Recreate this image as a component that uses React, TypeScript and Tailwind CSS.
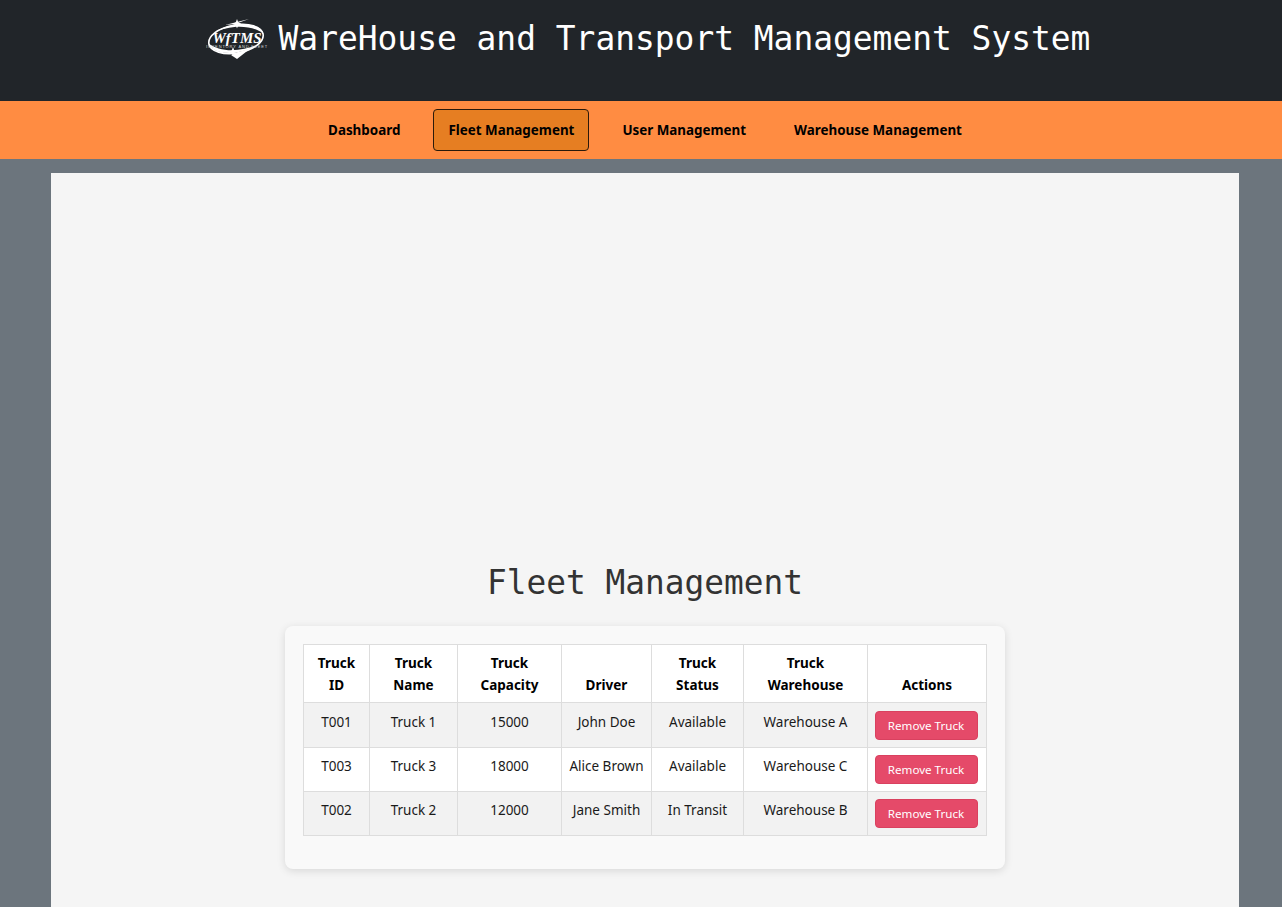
import React from "react";

const rows = [
  ["T001", "Truck 1", "15000", "John Doe", "Available", "Warehouse A"],
  ["T003", "Truck 3", "18000", "Alice Brown", "Available", "Warehouse C"],
  ["T002", "Truck 2", "12000", "Jane Smith", "In Transit", "Warehouse B"],
];
const rowHeights = ["h-[45px]", "h-[44px]", "h-[44px]"];
const textPad = ["pt-[9px]", "pt-[8px]", "pt-[8px]"];
const btnPad = ["pt-[8px]", "pt-[7px]", "pt-[7px]"];
const headers: [string, string | null][] = [
  ["Truck", "ID"],
  ["Truck", "Name"],
  ["Truck", "Capacity"],
  ["Driver", null],
  ["Truck", "Status"],
  ["Truck", "Warehouse"],
  ["Actions", null],
];
const nav = ["Dashboard", "Fleet Management", "User Management", "Warehouse Management"];

function Logo() {
  return (
    <svg width="64" height="42" viewBox="1 0 64 42" className="shrink-0">
      <ellipse cx="31" cy="21" rx="27.5" ry="14" fill="none" stroke="#fff" strokeWidth="1.6" transform="rotate(-10 31 21)" />
      <path d="M3 25 C6 36 32 40 54 26 C40 33 16 36 3 25Z" fill="#fff" />
      <path d="M59 16 C54 4 28 2 8 15 C24 7 46 6 59 16Z" fill="#fff" />
      <path d="M20 7 L44 1 L30 6Z M26 37 L46 30 L32 41 Z" fill="#fff" />
      <path d="M32 1 l1.3 3.4 3.4 1.3 -3.4 1.3 -1.3 3.4 -1.3 -3.4 -3.4 -1.3 3.4 -1.3Z" fill="#fff" />
      <path d="M28 29 l1.3 3.4 3.4 1.3 -3.4 1.3 -1.3 3.4 -1.3 -3.4 -3.4 -1.3 3.4 -1.3Z" fill="#fff" />
      <text x="32" y="25" textAnchor="middle" fill="#fff" fontSize="15" fontWeight="700" fontStyle="italic" fontFamily="'Liberation Serif', serif">WfTMS</text>
      <text x="32" y="30" textAnchor="middle" fill="#d8d8d8" fontSize="4" letterSpacing="0.85" fontFamily="'Liberation Sans', sans-serif">INVENTORY AND FLEET</text>
    </svg>
  );
}

export default function App() {
  return (
    <div className="h-screen overflow-hidden bg-[#6c757d]">
      <div className="w-[1290px] font-['Noto_Sans',sans-serif]">
        <header className="h-[101px] bg-[#212529] flex justify-center items-start pt-[18px] pl-[6px] gap-[9px]">
          <Logo />
          <h1 className="mt-px font-['DejaVu_Sans_Mono',monospace] text-[32.9px] leading-[40px] font-normal text-white whitespace-nowrap">
            WareHouse and Transport Management System
          </h1>
        </header>
        <nav className="h-[58px] bg-[#ff8c42] flex justify-center items-center gap-[18px]">
          {nav.map((n) => (
            <div
              key={n}
              className={
                "h-[42px] px-[14px] flex items-center text-[13.4px] font-bold text-black rounded-[4px] border whitespace-nowrap " +
                (n === "Fleet Management" ? "bg-[#e67e22] border-[#2b1a0a]" : "border-transparent")
              }
            >
              {n}
            </div>
          ))}
        </nav>
        <main className="mx-[51px] mt-[14px] h-[800px] bg-[#f5f5f5] flex flex-col items-center pt-[388px]">
          <h2 className="font-['DejaVu_Sans_Mono',monospace] text-[32.8px] leading-[44px] font-normal text-[#333] whitespace-nowrap">
            Fleet Management
          </h2>
          <section className="mt-[21px] w-[720px] h-[243px] p-[18px] bg-[#f9f9f9] rounded-[8px] shadow-[0_2px_8px_rgba(0,0,0,0.12)]">
            <table className="table-fixed border-collapse w-[683px] text-[13.5px] text-center text-[#1a1a1a]">
              <colgroup>
                <col className="w-[66px]" />
                <col className="w-[88px]" />
                <col className="w-[104px]" />
                <col className="w-[90px]" />
                <col className="w-[92px]" />
                <col className="w-[124px]" />
                <col className="w-[119px]" />
              </colgroup>
              <thead>
                <tr className="h-[58px] bg-white">
                  {headers.map(([a, b], i) => (
                    <th key={i} className="border border-[#ddd] align-bottom pb-[6px] font-bold text-black leading-[22px]">
                      {a}
                      {b && <br />}
                      {b}
                    </th>
                  ))}
                </tr>
              </thead>
              <tbody>
                {rows.map((r, ri) => (
                  <tr key={r[0]} className={rowHeights[ri] + " " + (ri % 2 === 0 ? "bg-[#f2f2f2]" : "bg-white")}>
                    {r.map((c, i) => (
                      <td key={i} className={"border border-[#ddd] align-top leading-[20px] whitespace-nowrap " + textPad[ri]}>
                        {c}
                      </td>
                    ))}
                    <td className={"border border-[#ddd] align-top " + btnPad[ri]}>
                      <button className="mr-[2px] w-[103px] h-[29px] bg-[#e54a69] border border-[#d9415f] rounded-[4px] text-white text-[11.6px] leading-none">
                        Remove Truck
                      </button>
                    </td>
                  </tr>
                ))}
              </tbody>
            </table>
          </section>
        </main>
      </div>
    </div>
  );
}
